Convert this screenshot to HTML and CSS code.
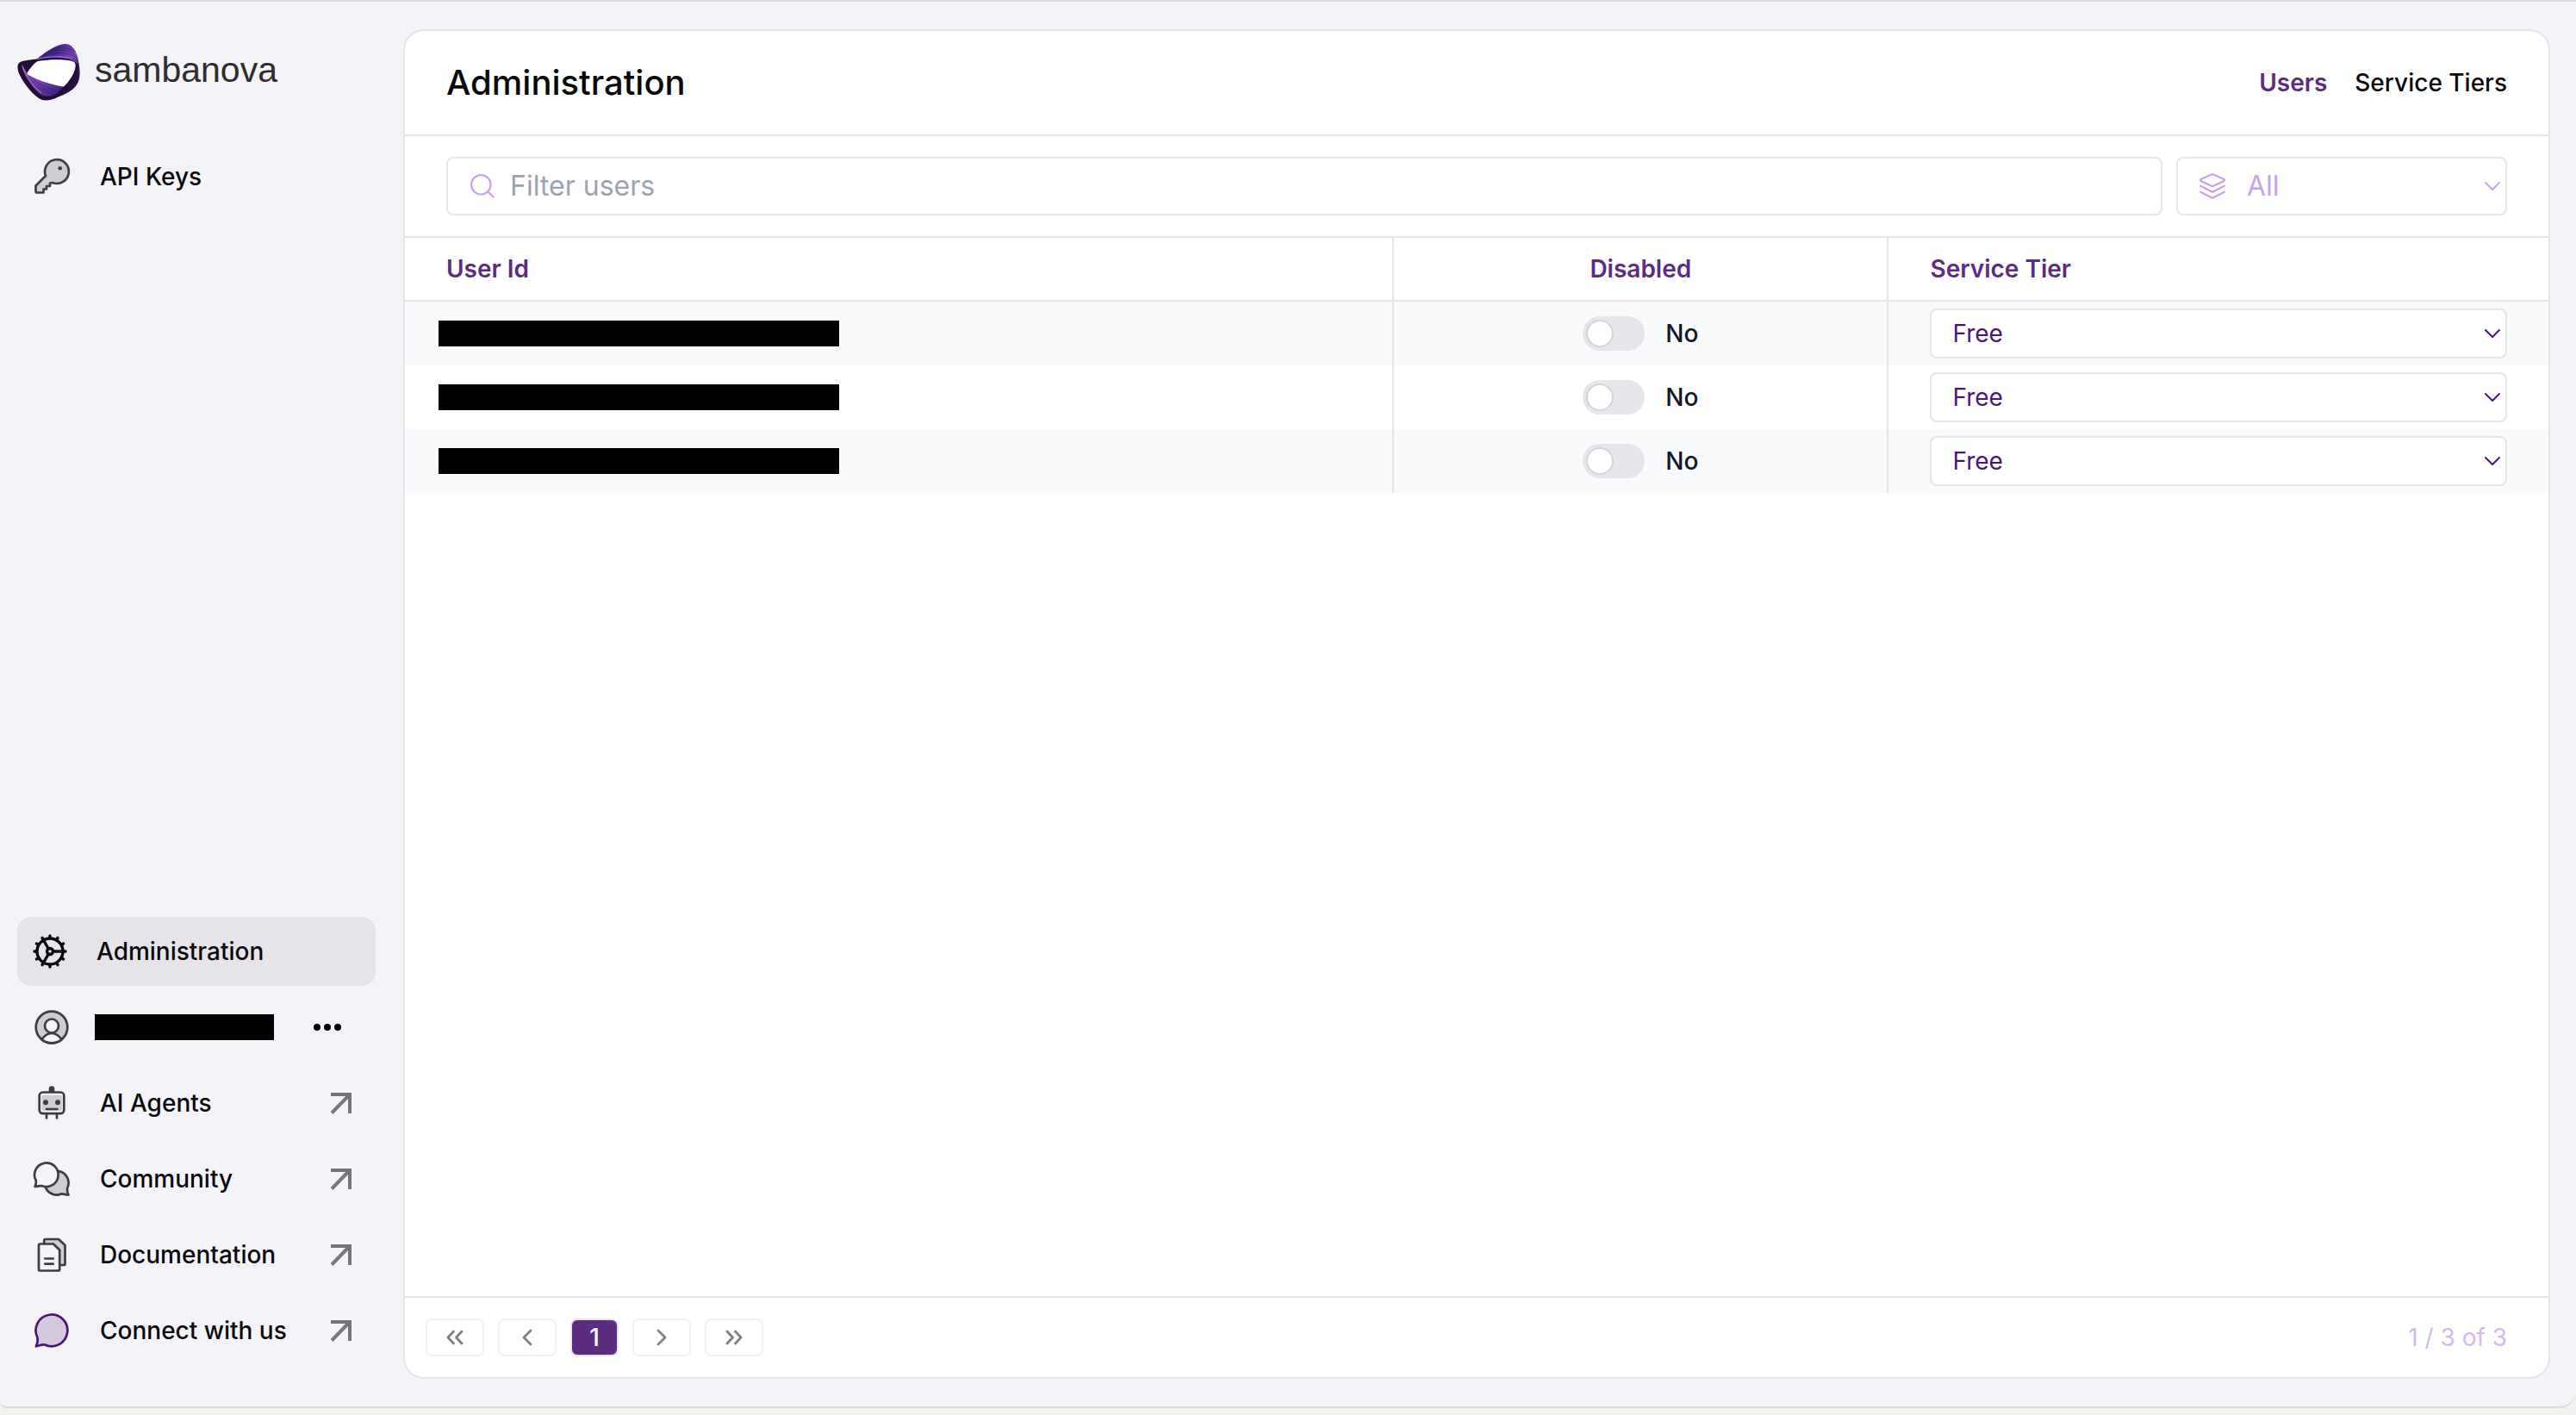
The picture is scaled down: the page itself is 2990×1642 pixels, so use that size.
FILE: index.html
```html
<!DOCTYPE html>
<html lang="en">
<head>
<meta charset="UTF-8">
<meta name="viewport" content="width=device-width, initial-scale=1.0">
<title>Administration</title>
<link rel="stylesheet" href="styles.css">
</head>
<body>
    <div class="app">
        <aside class="sidebar">
            <a class="logo" href="#">
                <svg class="logo-mark" viewBox="0 0 74 66" aria-hidden="true">
                    <defs>
                        <linearGradient id="ribbonTop" x1="0" y1="0" x2="1" y2="1">
                            <stop offset="0" stop-color="#3a2a8c"/>
                            <stop offset="0.3" stop-color="#46288c"/>
                            <stop offset="0.55" stop-color="#8a4cc4"/>
                            <stop offset="0.75" stop-color="#2a1140"/>
                            <stop offset="1" stop-color="#1f0d30"/>
                        </linearGradient>
                        <linearGradient id="ribbonBottom" x1="0" y1="0" x2="1" y2="0.6">
                            <stop offset="0" stop-color="#9a5fd0"/>
                            <stop offset="0.5" stop-color="#7a3fb4"/>
                            <stop offset="1" stop-color="#3c2a8c"/>
                        </linearGradient>
                    </defs>
                    <path fill="url(#ribbonTop)" d="M22 18C32 10 44 1 55 0C65 -0.5 70 10 71.500 22C73.500 34 73 44 67 50C61 57 46 63 34 65L30 60L66 20Z"/>
                    <path fill="#230f35" d="M0.500 27C0.500 22 3 20.500 8 19.500C26 16.500 46 15 60 16.500C68 17.500 71.500 20 71 27C70 37 62 50 52 58C44 65 32 68 25 63C15 56 5 42 1.500 33C0.800 31 0.500 29 0.500 27Z"/>
                    <path fill="url(#ribbonBottom)" d="M5.500 24C6 34 18 53 29 59.500C36 62.500 46 60 54 49L40 43L12 35Z"/>
                    <path fill="none" stroke="#3d1c66" stroke-width="0.700" d="M9 33C20 44 32 52 49 54M10 36C20 48 31 54 47 56M12 40C21 51 30 56 44 58"/>
                    <path fill="none" stroke="#c390ee" stroke-width="0.800" d="M6 25C9 36 18 49 28 57M23 17.500C40 13.500 60 13 70 22"/>
                    <path fill="none" stroke="#24145c" stroke-width="0.600" d="M30 13C42 6 58 4 68 14M36 9C46 3 58 3 67 9M27 15.500C40 9 58 8 69.500 17M71 26C70 38 64 47 55 56M72 32C70 42 65 48 58 55"/>
                    <path fill="#230f35" d="M6 24.500L26 18L12 35Z"/>
                    <path fill="#fff" d="M24 20C36 18 52 17.500 62 19.500C67 20.500 68 22 67.500 27C66.500 34 61 43 54 49.500C44 48.500 28 44 12 35.500C11 34.500 11.500 33 12.500 32C16 27 20 21.500 24 20Z"/>
                </svg>
                <span class="logo-text">sambanova</span>
            </a>

            <nav class="nav">
                <a class="nav-item" href="#">
                    <svg class="icon" viewBox="0 0 40 40" aria-hidden="true">
                        <path class="duo" d="M13 19A13.900 13.900 0 1 1 21 27L18 27.500V31H14V34.500H10.500V38.500H3Q1.500 38.500 1.500 37V30.500Z"/>
                        <circle cx="29.700" cy="10.300" r="2.300" fill="#3f3d44"/>
                    </svg>
                    <span>API Keys</span>
                </a>
            </nav>

            <nav class="nav nav-bottom">
                <a class="nav-item nav-tight active" href="#">
                    <svg class="icon icon-cog" viewBox="0 0 48 48" aria-hidden="true">
                        <circle cx="24" cy="24" r="15"/>
                        <circle cx="24" cy="24" r="3.500"/>
                        <path d="M28 24H39M22 20.500L16.500 11M22 27.500L16.500 37"/>
                        <path d="M40 24H42M37.900 32L39.600 33M32 37.900L33 39.600M24 40V42M16 37.900L15 39.600M10.100 32L8.400 33M8 24H6M10.100 16L8.400 15M16 10.100L15 8.400M24 8V6M32 10.100L33 8.400M37.900 16L39.600 15"/>
                    </svg>
                    <span>Administration</span>
                </a>
                <div class="nav-item nav-tight">
                    <svg class="icon" viewBox="0 0 40 40" aria-hidden="true">
                        <circle class="duo" cx="20" cy="20" r="18.300"/>
                        <path class="duo-light" d="M8.500 34.300C12 29 16 27 20 27S28 29 31.500 34.300Q26 38.300 20 38.300T8.500 34.300Z"/>
                        <circle class="duo-light" cx="20" cy="18.500" r="8"/>
                    </svg>
                    <span class="redacted redacted-name"></span>
                    <button class="more" type="button" aria-label="More">
                        <svg viewBox="0 0 32 8" aria-hidden="true">
                            <circle cx="4" cy="4" r="4"/><circle cx="16" cy="4" r="4"/><circle cx="28" cy="4" r="4"/>
                        </svg>
                    </button>
                </div>
                <a class="nav-item" href="#">
                    <svg class="icon" viewBox="0 0 40 40" aria-hidden="true">
                        <path fill="#3f3d44" d="M16.700 8V3.500Q16.700 0.300 20 0.300T23.300 3.500V8Z"/>
                        <rect class="duo-light" x="5.700" y="7.500" width="28.600" height="24.600" rx="4"/>
                        <rect x="8.300" y="10.700" width="23.600" height="18.300" rx="2" fill="#cfcdd3"/>
                        <circle cx="13" cy="19.300" r="3" fill="#3f3d44"/>
                        <circle cx="27" cy="19.300" r="3" fill="#3f3d44"/>
                        <path class="line" d="M14 27H26.500M14 33V37.500M26 33V37.500"/>
                    </svg>
                    <span>AI Agents</span>
                    <svg class="out" viewBox="0 0 28 28" aria-hidden="true"><path d="M4 4H26V26M5 25.500L26 4"/></svg>
                </a>
                <a class="nav-item" href="#">
                    <svg class="icon" viewBox="0 0 40 40" aria-hidden="true">
                        <path class="duo" d="M39.500 38.600C37.800 35.500 37.800 33.500 38 31A13.800 13.800 0 1 0 31 37.400C33 37 36 38.600 39.500 38.600Z"/>
                        <path class="duo-light" d="M0.500 29C2 26 2.200 24.500 1.800 22A13.800 13.800 0 1 1 9 28.200C7 27.500 4 29 0.500 29Z"/>
                    </svg>
                    <span>Community</span>
                    <svg class="out" viewBox="0 0 28 28" aria-hidden="true"><path d="M4 4H26V26M5 25.500L26 4"/></svg>
                </a>
                <a class="nav-item" href="#">
                    <svg class="icon" viewBox="0 0 40 40" aria-hidden="true">
                        <path class="duo" d="M11.200 7V3.500Q11.200 2 12.700 2H28L35.500 9V30.500Q35.500 32 34 32H29Z"/>
                        <path class="duo-light" d="M5 9Q5 7.500 6.500 7.500H22L29.200 14.500V37Q29.200 38.500 27.700 38.500H6.500Q5 38.500 5 37Z"/>
                        <path class="line" d="M12.300 24.500H21.700M12.300 30.700H21.700"/>
                    </svg>
                    <span>Documentation</span>
                    <svg class="out" viewBox="0 0 28 28" aria-hidden="true"><path d="M4 4H26V26M5 25.500L26 4"/></svg>
                </a>
                <a class="nav-item" href="#">
                    <svg class="icon" viewBox="0 0 40 40" aria-hidden="true">
                        <path class="duo duo-purple" d="M1.800 38.300C3.500 35 4.200 32 3.400 28A18.400 18.400 0 1 1 12 36.500C8 35.500 5 38.300 1.800 38.300Z"/>
                    </svg>
                    <span>Connect with us</span>
                    <svg class="out" viewBox="0 0 28 28" aria-hidden="true"><path d="M4 4H26V26M5 25.500L26 4"/></svg>
                </a>
            </nav>
        </aside>

        <main class="panel">
            <header class="panel-header">
                <h1>Administration</h1>
                <nav class="tabs">
                    <a class="tab current" href="#">Users</a>
                    <a class="tab" href="#">Service Tiers</a>
                </nav>
            </header>

            <div class="filters">
                <label class="search">
                    <svg viewBox="0 0 28 28" aria-hidden="true"><circle cx="12.300" cy="12.300" r="11.200"/><path d="M20.500 20.500L26.800 26.800"/></svg>
                    <input type="text" placeholder="Filter users" aria-label="Filter users">
                </label>
                <div class="tier-filter">
                    <svg class="layers" viewBox="0 0 30 30" aria-hidden="true">
                        <path d="M13.500 1.700Q15 1 16.500 1.700L28 6.700Q30 8 28 9.300L15 15.200L2 9.300Q0 8 2 6.700ZM1 14.800L15 21.800L29 14.800M1 21.800L15 28.800L29 21.800"/>
                    </svg>
                    <select aria-label="Tier">
                        <option>All</option>
                        <option>Free</option>
                    </select>
                    <svg class="chevron" viewBox="0 0 18 10" aria-hidden="true"><path d="M1 1L9 9L17 1"/></svg>
                </div>
            </div>

            <table class="users">
                <colgroup>
                    <col class="col-user">
                    <col class="col-disabled">
                    <col class="col-tier">
                </colgroup>
                <thead>
                    <tr>
                        <th>User Id</th>
                        <th class="center">Disabled</th>
                        <th>Service Tier</th>
                    </tr>
                </thead>
                <tbody>
                    <tr>
                        <td class="user-id"><span class="redacted"></span></td>
                        <td><label class="switch"><input type="checkbox"><span>No</span></label></td>
                        <td>
                            <div class="tier">
                                <select aria-label="Service Tier"><option>Free</option></select>
                                <svg class="chevron" viewBox="0 0 18 10" aria-hidden="true"><path d="M1 1L9 9L17 1"/></svg>
                            </div>
                        </td>
                    </tr>
                    <tr>
                        <td class="user-id"><span class="redacted"></span></td>
                        <td><label class="switch"><input type="checkbox"><span>No</span></label></td>
                        <td>
                            <div class="tier">
                                <select aria-label="Service Tier"><option>Free</option></select>
                                <svg class="chevron" viewBox="0 0 18 10" aria-hidden="true"><path d="M1 1L9 9L17 1"/></svg>
                            </div>
                        </td>
                    </tr>
                    <tr>
                        <td class="user-id"><span class="redacted"></span></td>
                        <td><label class="switch"><input type="checkbox"><span>No</span></label></td>
                        <td>
                            <div class="tier">
                                <select aria-label="Service Tier"><option>Free</option></select>
                                <svg class="chevron" viewBox="0 0 18 10" aria-hidden="true"><path d="M1 1L9 9L17 1"/></svg>
                            </div>
                        </td>
                    </tr>
                </tbody>
            </table>

            <footer class="panel-footer">
                <div class="pages">
                    <button type="button" aria-label="First page"><svg viewBox="0 0 24 24" aria-hidden="true"><path d="M10.500 5L4 12L10.500 19M20 5L13.500 12L20 19"/></svg></button>
                    <button type="button" aria-label="Previous page"><svg viewBox="0 0 24 24" aria-hidden="true"><path d="M16 4L8 12L16 20"/></svg></button>
                    <button type="button" class="current">1</button>
                    <button type="button" aria-label="Next page"><svg viewBox="0 0 24 24" aria-hidden="true"><path d="M8 4L16 12L8 20"/></svg></button>
                    <button type="button" aria-label="Last page"><svg viewBox="0 0 24 24" aria-hidden="true"><path d="M4 5L10.500 12L4 19M13.500 5L20 12L13.500 19"/></svg></button>
                </div>
                <span class="count">1 / 3 of 3</span>
            </footer>
        </main>
    </div>
</body>
</html>
```
FILE: styles.css
```css
*,
*::before {
    box-sizing: border-box;
}

body {
    margin: 0;
    background-color: #f2f1ef;
    color: #09090b;
    font-family: Inter, "Liberation Sans", sans-serif;
    font-size: 28px;
    line-height: 34px;
    font-weight: 500;
}

a {
    color: inherit;
    text-decoration: none;
}

button,
input,
select {
    font: inherit;
    color: inherit;
    margin: 0;
}

svg {
    display: block;
    flex: none;
    overflow: visible;
}

.app {
    display: flex;
    height: calc(100vh - 8px);
    background-color: #f4f3f8;
    border-top: 2px solid #d9d9d3;
    border-bottom: 2px solid #d9d9d3;
    border-radius: 0 0 20px 8px;
}

/* sidebar */

.sidebar {
    display: flex;
    flex-direction: column;
    flex: 0 0 468px;
    padding: 49px 32px 48px 20px;
}

.logo {
    display: flex;
    align-items: center;
    gap: 16px;
    margin-bottom: 48px;
}

.logo-mark {
    width: 74px;
    height: 66px;
}

.logo-text {
    color: #2e2e2e;
    font-family: "Liberation Sans", sans-serif;
    font-size: 41px;
    line-height: 60px;
    font-weight: 400;
    padding-bottom: 6px;
}

.nav {
    display: flex;
    flex-direction: column;
    gap: 8px;
}

.nav-bottom {
    margin-top: auto;
}

.nav-item {
    display: flex;
    align-items: center;
    gap: 36px;
    height: 80px;
    padding: 0 28px 0 20px;
    border-radius: 16px;
}

.nav-tight {
    gap: 30px;
}

.nav-item.active {
    padding-left: 14px;
    background-color: #e6e4e9;
}

.icon {
    width: 40px;
    height: 40px;
}

.icon-cog {
    width: 48px;
    height: 48px;
    fill: none;
    stroke: #09090b;
    stroke-width: 3.4;
    stroke-linecap: round;
}

.duo,
.duo-light,
.line {
    stroke: #3f3d44;
    stroke-width: 2.7px;
    stroke-linejoin: round;
    stroke-linecap: round;
}

.duo {
    fill: #cfcdd3;
}

.duo-light {
    fill: #f4f3f8;
}

.line {
    fill: none;
}

.duo-purple {
    fill: #d5c7de;
    stroke: #4b1578;
}

.out {
    width: 28px;
    height: 28px;
    margin-left: auto;
    fill: none;
    stroke: #767676;
    stroke-width: 4;
}

.more {
    margin-left: auto;
    margin-right: 12px;
    padding: 0;
    border: none;
    background: none;
    cursor: pointer;
}

.more svg {
    width: 32px;
    height: 8px;
}

.redacted {
    display: block;
    width: 465px;
    height: 30px;
    background-color: #000;
}

.redacted-name {
    width: 208px;
}

/* main panel */

.panel {
    display: flex;
    flex-direction: column;
    flex: 1;
    min-width: 0;
    margin: 32px 30px 32px 0;
    background-color: #fff;
    border: 2px solid #e4e4e9;
    border-radius: 24px;
    overflow: hidden;
}

.panel-header {
    display: flex;
    align-items: center;
    justify-content: space-between;
    padding: 36px 48px;
    border-bottom: 2px solid #e4e4e9;
}

h1 {
    margin: 0;
    font-size: 40px;
    line-height: 48px;
    font-weight: 500;
}

.tabs {
    display: flex;
    gap: 32px;
}

.tab.current {
    color: #5b2c82;
    font-weight: 600;
}

.filters {
    display: flex;
    gap: 16px;
    padding: 24px 48px;
    border-bottom: 2px solid #e4e4e9;
    font-size: 32px;
    line-height: 40px;
    font-weight: 400;
}

.search,
.tier-filter {
    display: flex;
    align-items: center;
    border: 2px solid #e4e4e9;
    border-radius: 8px;
}

.search {
    flex: 1;
    gap: 18px;
    padding: 12px 26px;
}

.search svg {
    width: 28px;
    height: 28px;
    fill: none;
    stroke: #c8a2ee;
    stroke-width: 2.2;
    stroke-linecap: round;
}

.search input {
    flex: 1;
    height: 40px;
    padding: 0;
    border: none;
    outline: none;
    background: none;
}

.search input::placeholder {
    color: #9ca3af;
    opacity: 1;
}

.tier-filter,
.tier {
    position: relative;
}

.tier-filter {
    flex: 0 0 384px;
    color: #c8a2ee;
}

.layers {
    position: absolute;
    left: 25px;
    width: 30px;
    height: 30px;
    fill: none;
    stroke: currentColor;
    stroke-width: 2.2;
    stroke-linecap: round;
    stroke-linejoin: round;
    pointer-events: none;
}

select {
    width: 100%;
    appearance: none;
    outline: none;
}

.tier-filter select {
    height: 64px;
    padding: 0 48px 0 80px;
    border: none;
    background: none;
}

.chevron {
    position: absolute;
    right: 8px;
    top: calc(50% - 5px);
    width: 18px;
    height: 10px;
    fill: none;
    stroke: currentColor;
    stroke-width: 2;
    stroke-linecap: round;
    stroke-linejoin: round;
    pointer-events: none;
}

.tier-filter .chevron {
    right: 6px;
}

.users {
    width: 100%;
    table-layout: fixed;
    border-collapse: separate;
    border-spacing: 0;
}

.col-user {
    width: 46.15%;
}

.col-disabled {
    width: 23.08%;
}

.col-tier {
    width: 30.77%;
}

.users th {
    padding: 19px 48px;
    border-bottom: 2px solid #e4e4e9;
    color: #5b2c82;
    font-weight: 600;
    text-align: left;
}

.users th.center {
    text-align: center;
}

.users td {
    padding: 8px 48px;
}

.users th:not(:last-child),
.users td:not(:last-child) {
    border-right: 2px solid #e4e4e9;
}

.users tbody tr:nth-child(odd) {
    background-color: #f9fafc;
}

.users .user-id {
    padding-left: 39px;
}

.switch {
    display: flex;
    align-items: center;
    justify-content: center;
    gap: 24px;
    color: #111827;
}

.switch input {
    appearance: none;
    width: 72px;
    height: 40px;
    padding: 4px;
    border: none;
    border-radius: 20px;
    background-color: #e5e6ea;
    cursor: pointer;
}

.switch input::before {
    content: "";
    display: block;
    width: 32px;
    height: 32px;
    border: 2px solid #d1d5db;
    border-radius: 50%;
    background-color: #fff;
}

.switch input:checked {
    background-color: #5b2c82;
}

.switch input:checked::before {
    margin-left: auto;
}

.tier {
    color: #4b1578;
}

.tier select {
    display: block;
    height: 58px;
    padding: 0 48px 0 24px;
    border: 2px solid #e4e4e9;
    border-radius: 8px;
    background-color: #fff;
    font-weight: 400;
}

.panel-footer {
    display: flex;
    align-items: center;
    justify-content: space-between;
    margin-top: auto;
    padding: 24px 48px 24px 24px;
    border-top: 2px solid #e4e4e9;
}

.pages {
    display: flex;
    gap: 16px;
}

.pages button {
    display: flex;
    align-items: center;
    justify-content: center;
    width: 68px;
    height: 44px;
    padding: 0;
    border: 2px solid #f2f2f4;
    border-radius: 8px;
    background-color: #fff;
    cursor: pointer;
}

.pages button.current {
    width: 56px;
    border-color: #e4e4e9;
    background-color: #5b2c7f;
    color: #fff;
}

.pages svg {
    width: 24px;
    height: 24px;
    fill: none;
    stroke: #808080;
    stroke-width: 2.8;
    stroke-linecap: round;
    stroke-linejoin: round;
}

.count {
    color: #d4b8f4;
    font-weight: 400;
}
```
